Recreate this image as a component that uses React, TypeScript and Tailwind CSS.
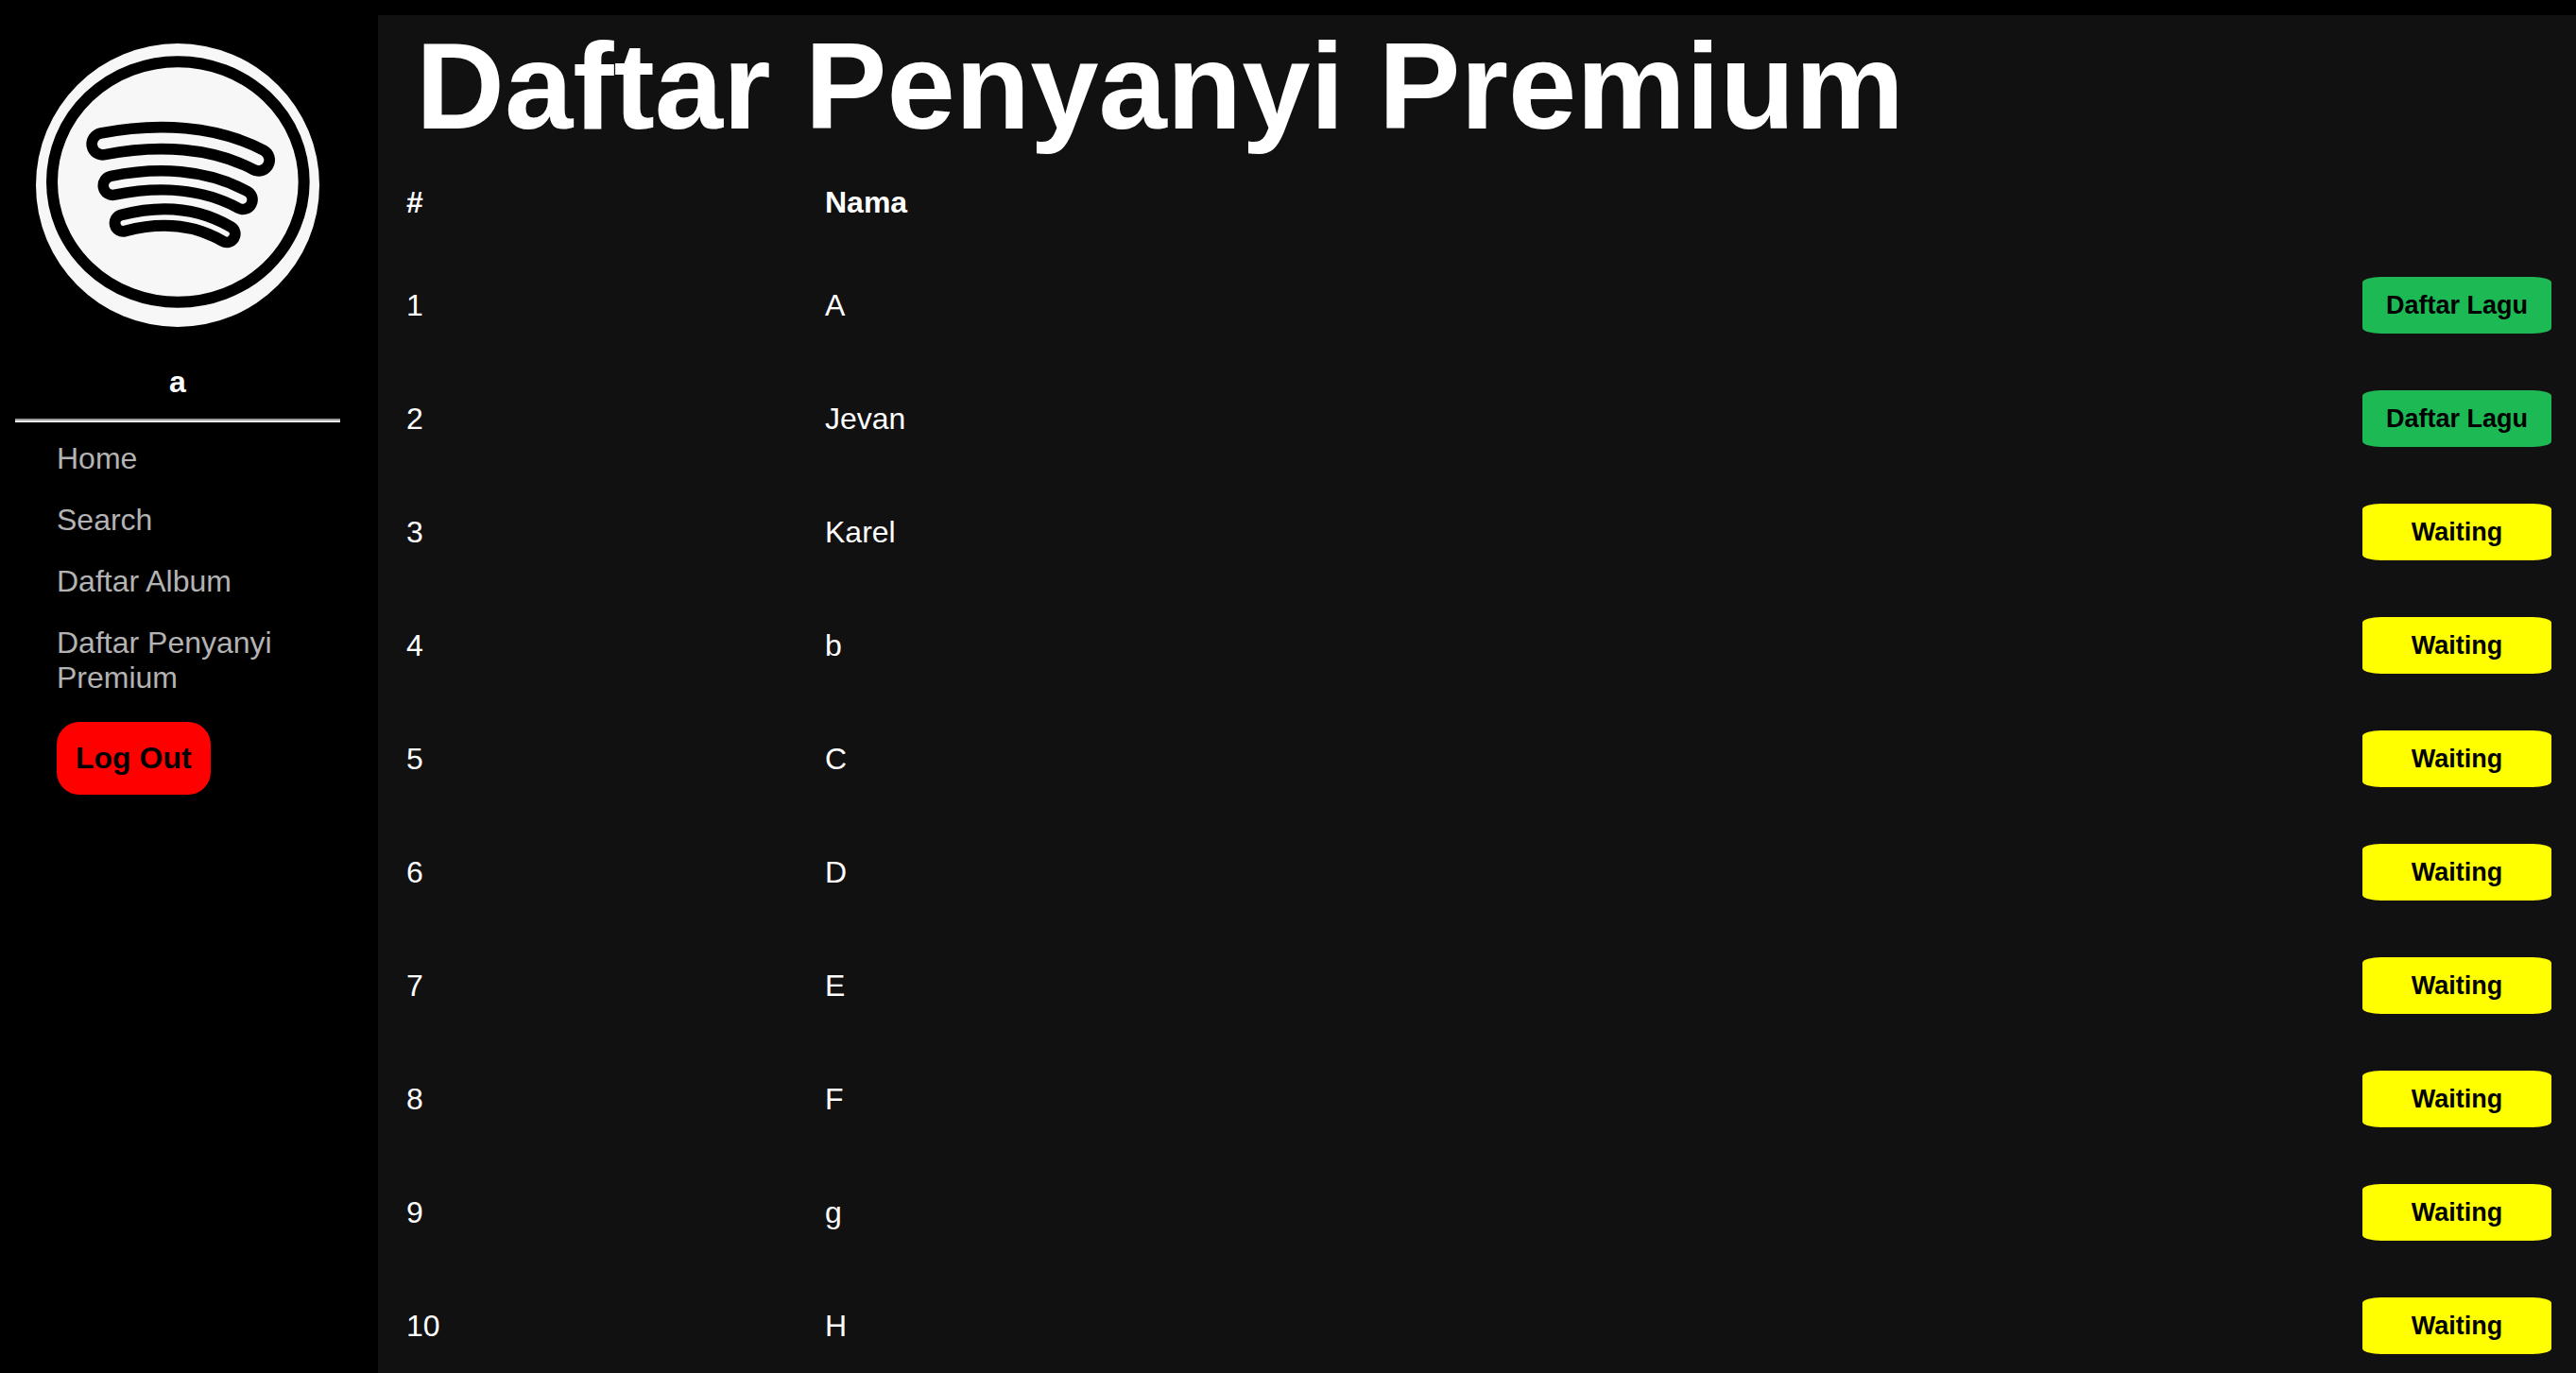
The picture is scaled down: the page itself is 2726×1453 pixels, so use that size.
import React from "react";

const navLinks = ["Home", "Search", "Daftar Album", "Daftar Penyanyi Premium"];

const singers = [
  { id: 1, name: "A", subscribed: true },
  { id: 2, name: "Jevan", subscribed: true },
  { id: 3, name: "Karel", subscribed: false },
  { id: 4, name: "b", subscribed: false },
  { id: 5, name: "C", subscribed: false },
  { id: 6, name: "D", subscribed: false },
  { id: 7, name: "E", subscribed: false },
  { id: 8, name: "F", subscribed: false },
  { id: 9, name: "g", subscribed: false },
  { id: 10, name: "H", subscribed: false },
];

function Logo() {
  return (
    <svg viewBox="114 138 900 900" className="size-[300px]" role="img" aria-label="Logo" fill="none" strokeLinecap="round">
      <circle cx="564" cy="588" r="450" fill="#f7f7f7" />
      <ellipse cx="565" cy="577.5" rx="400" ry="382" stroke="#000" strokeWidth="36" />
      <g stroke="#000">
        <path d="M326 457C500 423 680 433 821 508" strokeWidth="104" />
        <path d="M358 589C500 560 648 567 771 634" strokeWidth="95" />
        <path d="M391 708C506 678 620 684 720 743" strokeWidth="88" />
      </g>
      <g stroke="#f7f7f7">
        <path d="M326 457C500 423 680 433 821 508" strokeWidth="34" />
        <path d="M358 589C500 560 648 567 771 634" strokeWidth="26" />
        <path d="M391 708C506 678 620 684 720 743" strokeWidth="17" />
      </g>
    </svg>
  );
}

function Sidebar() {
  return (
    <aside className="w-[400px] shrink-0 pl-4 pr-10 pt-[46px]">
      <div className="flex flex-col items-center">
        <Logo />
        <p className="mt-10 font-bold">a</p>
      </div>
      <hr className="mt-5 border-t-2 border-b-2 border-t-[#9a9a9a] border-b-[#eeeeee]" />
      <nav className="flex flex-col items-start gap-7 py-5 pl-11 text-[#b3b3b3]">
        {navLinks.map((label) => (
          <a key={label} href="#">
            {label}
          </a>
        ))}
        <button type="button" className="rounded-3xl bg-[#ff0000] p-5 font-bold text-black">
          Log Out
        </button>
      </nav>
    </aside>
  );
}

function SingerTable() {
  return (
    <table className="w-full table-fixed text-left">
      <thead>
        <tr className="h-[97px]">
          <th className="w-[473px] pl-[30px]">#</th>
          <th>Nama</th>
          <th className="w-[226px]" aria-label="Status" />
        </tr>
      </thead>
      <tbody>
        {singers.map(({ id, name, subscribed }) => (
          <tr key={id} className="h-[120px]">
            <td className="pl-[30px]">{id}</td>
            <td>{name}</td>
            <td>
              <button
                type="button"
                className={
                  "block h-[60px] w-[200px] rounded-[10%] text-[27px] font-bold text-black " +
                  (subscribed ? "bg-[#1db954]" : "bg-[#ffff00]")
                }
              >
                {subscribed ? "Daftar Lagu" : "Waiting"}
              </button>
            </td>
          </tr>
        ))}
      </tbody>
    </table>
  );
}

export default function App() {
  return (
    <div className="flex h-screen overflow-hidden bg-black font-['Liberation_Sans',Arial,sans-serif] text-[32px] leading-[37px] text-white">
      <Sidebar />
      <main className="mt-4 min-w-0 flex-1 bg-[#111111]">
        <h1 className="pl-10 text-[130px] font-bold leading-[150px]">Daftar Penyanyi Premium</h1>
        <SingerTable />
      </main>
    </div>
  );
}
